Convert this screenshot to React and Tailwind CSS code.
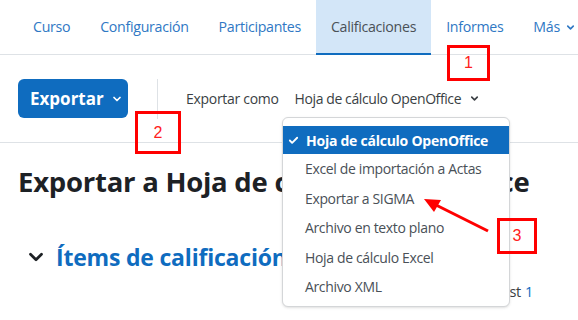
import { Check, ChevronDown } from 'lucide-react';

const tabs = ['Curso', 'Configuración', 'Participantes', 'Calificaciones', 'Informes'];

const formats = [
    'Hoja de cálculo OpenOffice',
    'Excel de importación a Actas',
    'Exportar a SIGMA',
    'Archivo en texto plano',
    'Hoja de cálculo Excel',
    'Archivo XML',
];

function Marker({ n, className }) {
    return (
        <div
            className={`absolute flex items-center justify-center border-[3px] border-[#ff0000] text-[16px] text-[#ff2020] font-['Liberation_Sans'] ${className}`}
        >
            {n}
        </div>
    );
}

export default function App() {
    return (
        <div className="relative w-[578px] h-[320px] overflow-hidden bg-white font-['Open_Sans',sans-serif]">
            {/* secondary navigation */}
            <nav className="flex h-[55px] pl-[18px] border-b border-[#dee2e6]">
                {tabs.map((t) => {
                    const active = t === 'Calificaciones';
                    return (
                        <div
                            key={t}
                            className={[
                                'flex items-center px-[15px] text-[14.2px] tracking-[-0.3px]',
                                active
                                    ? 'bg-[#d3e6f8] text-[#4a5157] border-b-2 border-[#0f6cbf] -mb-px'
                                    : 'text-[#2f78c4]',
                            ].join(' ')}
                        >
                            {t}
                        </div>
                    );
                })}
                <div className="flex items-center gap-[5px] px-[15px] text-[14.2px] tracking-[-0.3px] text-[#2f78c4]">
                    Más
                    <ChevronDown size={11} strokeWidth={3.5} />
                </div>
            </nav>

            {/* action bar */}
            <div className="flex items-center h-[88px] pl-[18px] border-b border-[#dee2e6]">
                <button className="flex items-center gap-[7px] w-[110px] h-[39px] pl-[12px] rounded-[6px] bg-[#0f6cbf] text-white text-[17px] font-bold">
                    Exportar
                    <ChevronDown size={12} strokeWidth={3.5} />
                </button>
                <div className="ml-[29px] w-px h-[40px] bg-[#dee2e6]" />
                <span className="ml-[28px] text-[14px] tracking-[-0.3px] text-[#3a3f44]">Exportar como</span>
                <span className="ml-[16px] flex items-center gap-[8px] text-[14px] tracking-[-0.4px] text-[#3a3f44]">
                    Hoja de cálculo OpenOffice
                    <ChevronDown size={11} strokeWidth={3.5} />
                </span>
            </div>

            {/* page content */}
            <h2 className="mt-[22px] pl-[18px] text-[27.5px] leading-[34px] font-bold text-[#1d2125] whitespace-nowrap tracking-[-0.25px]">
                Exportar a Hoja de cálculo OpenOffice
            </h2>
            <div className="mt-[43px] flex items-center pl-[25px]">
                <ChevronDown size={22} strokeWidth={3} className="text-[#1d2125]" />
                <span className="ml-[9px] text-[23px] leading-[30px] font-bold text-[#0f6cbf] whitespace-nowrap tracking-[-0.2px]">
                    Ítems de calificación
                </span>
            </div>
            <div className="mt-[9px] flex justify-end pr-[45px] text-[14.5px] tracking-[-0.3px] text-[#3a3f44]">
                Test <span className="ml-[4px] text-[#0f6cbf]">1</span>
            </div>

            {/* dropdown menu */}
            <div className="absolute left-[282px] top-[117px] w-[228px] h-[190px] py-[8px] rounded-[6px] border border-[#d4d6d8] bg-white shadow-sm">
                {formats.map((f, i) =>
                    i === 0 ? (
                        <div
                            key={f}
                            className="flex items-center h-[28px] pl-[5px] bg-[#0f6cbf] text-white text-[14px] font-bold tracking-[-0.25px]"
                        >
                            <Check size={11} strokeWidth={4} />
                            <span className="ml-[7px]">{f}</span>
                        </div>
                    ) : (
                        <div
                            key={f}
                            className="flex items-center h-[29.5px] pl-[22px] text-[14px] text-[#495057] tracking-[-0.35px]"
                        >
                            {f}
                        </div>
                    )
                )}
            </div>

            {/* annotations */}
            <Marker n="1" className="left-[447px] top-[45px] w-[43px] h-[36px]" />
            <Marker n="2" className="left-[135px] top-[111px] w-[46px] h-[43px]" />
            <Marker n="3" className="left-[497px] top-[218px] w-[40px] h-[36px]" />
            <svg className="absolute left-0 top-0" width="578" height="320">
                <line x1="488" y1="231" x2="436" y2="205" stroke="#ff0000" strokeWidth="3" />
                <polygon points="424,199 441,200 434,212" fill="#ff0000" />
            </svg>
        </div>
    );
}
